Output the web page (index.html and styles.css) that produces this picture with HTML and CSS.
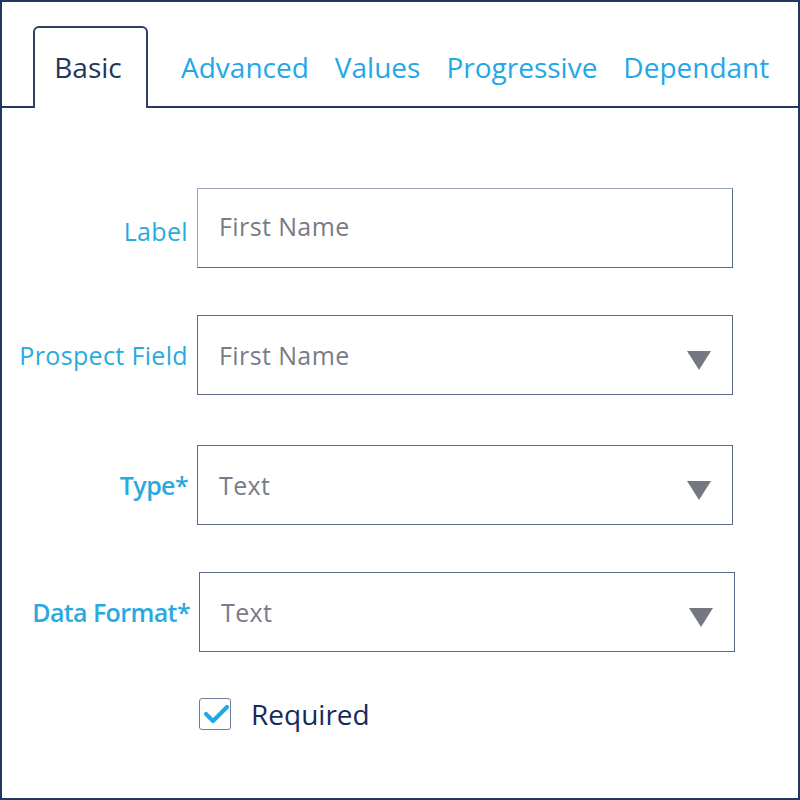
FILE: index.html
```html
<!DOCTYPE html>
<html>
<head>
<meta charset="utf-8">
<link rel="stylesheet" href="styles.css">
</head>
<body>
<div class="panel">
  <div class="tabs">
    <div class="tab active">Basic</div>
    <div class="tab">Advanced</div>
    <div class="tab">Values</div>
    <div class="tab">Progressive</div>
    <div class="tab">Dependant</div>
  </div>
  <div class="form">
    <div class="row row-label">
      <div class="label">Label</div>
      <div class="field"><span class="ph">First Name</span></div>
    </div>
    <div class="row row-prospect">
      <div class="label">Prospect Field</div>
      <div class="field"><span class="ph">First Name</span>
        <svg class="caret" width="24" height="19" viewBox="0 0 24 19"><polygon points="0,0 24,0 12,19" fill="#757880"/></svg>
      </div>
    </div>
    <div class="row row-type">
      <div class="label strong">Type*</div>
      <div class="field"><span class="ph">Text</span>
        <svg class="caret" width="24" height="19" viewBox="0 0 24 19"><polygon points="0,0 24,0 12,19" fill="#757880"/></svg>
      </div>
    </div>
    <div class="row row-format">
      <div class="label strong">Data Format*</div>
      <div class="field"><span class="ph">Text</span>
        <svg class="caret" width="24" height="19" viewBox="0 0 24 19"><polygon points="0,0 24,0 12,19" fill="#757880"/></svg>
      </div>
    </div>
    <div class="check-row">
      <div class="checkbox">
        <svg width="30" height="30" viewBox="0 0 30 30"><polyline points="6,15 13,22 27,8" fill="none" stroke="#22a8e6" stroke-width="4.2" stroke-linecap="round" stroke-linejoin="round"/></svg>
      </div>
      <span class="check-label">Required</span>
    </div>
  </div>
</div>
</body>
</html>
```
FILE: styles.css
```css
* { box-sizing: border-box; }
html, body { margin: 0; padding: 0; background: #fff; }
body { font-family: "Open Sans", "Noto Sans", sans-serif; }

.panel {
  width: 800px;
  height: 800px;
  border: 2px solid #22385e;
  background: #fff;
}

.tabs {
  display: flex;
  align-items: flex-end;
  height: 106px;
  padding: 24px 0 0 31px;
  border-bottom: 2px solid #22385e;
}

.tab {
  font-size: 28px;
  line-height: 38px;
  color: #22a8e6;
  padding: 20px 11px 22px;
  border: 2px solid transparent;
  border-bottom: 0;
  margin-bottom: -2px;
  white-space: nowrap;
}

.tab.active {
  width: 115px;
  text-align: center;
  padding-left: 0;
  padding-right: 5px;
  color: #22375c;
  background: #fff;
  border-color: #2d4166;
  border-radius: 6px 6px 0 0;
  margin-right: 20px;
}

.form {
  padding-top: 80px;
}

.row {
  display: flex;
  align-items: center;
  gap: 9px;
}

.row-label { margin-bottom: 47px; }
.row-prospect { margin-bottom: 50px; }
.row-type { margin-bottom: 47px; }
.row-format { margin-bottom: 43px; }
.row-format .label { width: 188px; }

.label {
  width: 186px;
  text-align: right;
  font-size: 25px;
  line-height: 34px;
  letter-spacing: 0.35px;
  color: #29a9e0;
  white-space: nowrap;
}

.row-label .label { padding-top: 5px; }

.label.strong {
  font-weight: 600;
  letter-spacing: -0.6px;
}

.field {
  width: 536px;
  height: 80px;
  border: 1px solid #5b6a88;
  display: flex;
  align-items: center;
  justify-content: space-between;
  padding: 0 21px 0 21px;
}

.row-label .field { padding-bottom: 5px; border-top-color: #9aa3b8; border-left-color: #9aa3b8; }

.ph {
  font-size: 25px;
  line-height: 34px;
  letter-spacing: 0.4px;
  color: #777c87;
}

.caret {
  display: block;
  margin-top: 11px;
}

.check-row {
  display: flex;
  align-items: center;
  gap: 20px;
  margin-left: 197px;
}

.checkbox {
  width: 32px;
  height: 32px;
  border: 1.5px solid #6f7d99;
  border-radius: 3px;
  display: flex;
  align-items: center;
  justify-content: center;
}

.checkbox svg { display: block; }

.check-label {
  font-size: 28px;
  line-height: 38px;
  color: #172b5a;
}
```
